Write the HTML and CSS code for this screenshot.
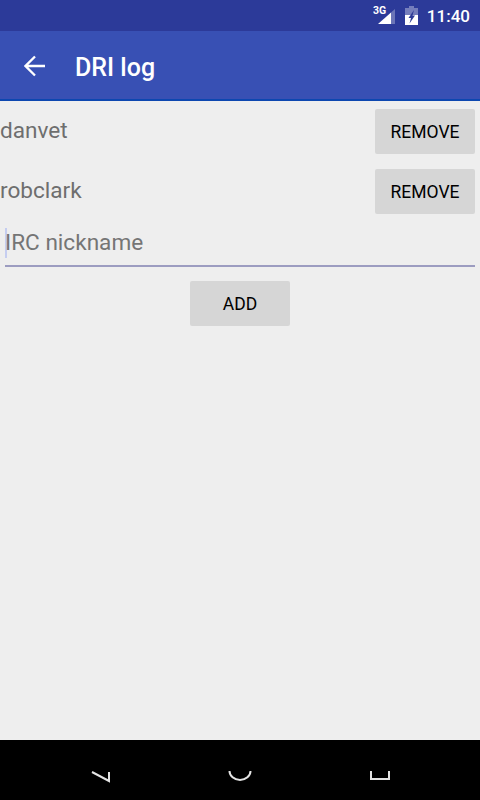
FILE: index.html
```html
<!DOCTYPE html>
<html>
<head>
  <title>DRI log</title>
  <link rel="stylesheet" href="styles.css">
</head>
<body>
  <div class="screen">
    <div class="status-bar">
      <svg class="signal" width="22" height="20" viewBox="0 0 22 20">
        <path d="M22 4v15h-4V7.500z" fill="#fff" opacity="0.3"/>
        <path d="M18 7.500V19H5z" fill="#fff"/>
        <text x="0" y="9" class="signal-label">3G</text>
      </svg>
      <svg class="battery" width="13" height="19" viewBox="0 0 13 19">
        <path d="M4 0h5v2h4v17H0V2h4z" fill="#fff" opacity="0.35"/>
        <path d="M0 9h13v10H0z" fill="#fff"/>
        <path d="M9 4 3.500 12H6L4.500 17.500 10 9.500H7.500z" fill="#2d3b97"/>
      </svg>
      <span class="clock">11:40</span>
    </div>

    <div class="app-bar">
      <svg class="back" width="22" height="22" viewBox="0 0 22 22">
        <path d="M21 11H3M11 1.500 1.500 11l9.500 9.500" fill="none" stroke="#fff" stroke-width="2.300"/>
      </svg>
      <h1>DRI log</h1>
    </div>

    <div class="content">
      <div class="row">
        <span class="nick">danvet</span>
        <button class="btn">REMOVE</button>
      </div>
      <div class="row">
        <span class="nick">robclark</span>
        <button class="btn">REMOVE</button>
      </div>
      <div class="field">
        <span class="caret"></span>
        <span class="placeholder">IRC nickname</span>
      </div>
      <div class="add-row">
        <button class="btn">ADD</button>
      </div>
    </div>

    <div class="nav-bar">
      <svg width="24" height="24" viewBox="0 0 24 24">
        <path d="M4 2 21 11V2" fill="none" stroke="#e4e4e4" stroke-width="2"/>
      </svg>
      <svg width="24" height="24" viewBox="0 0 24 24">
        <path d="M1.500 1a10.500 9 0 0 0 21 0" fill="none" stroke="#e4e4e4" stroke-width="2"/>
      </svg>
      <svg width="24" height="24" viewBox="0 0 24 24">
        <path d="M3 1v8h18V1" fill="none" stroke="#e4e4e4" stroke-width="2"/>
      </svg>
    </div>
  </div>
</body>
</html>
```

FILE: styles.css
```css
* {
  box-sizing: border-box;
}
html, body {
  margin: 0;
  padding: 0;
}
body {
  font-family: Roboto, "Noto Sans", sans-serif;
  background-color: #eeeeee;
}
.screen {
  width: 480px;
  height: 800px;
  display: flex;
  flex-direction: column;
  overflow: hidden;
}
.status-bar {
  height: 31px;
  background: #2c3a99;
  display: flex;
  align-items: center;
  justify-content: flex-end;
  padding-right: 10px;
  color: white;
}
.signal {
  margin-right: 10px;
  margin-top: -1px;
}
.signal-label {
  font-family: Roboto, sans-serif;
  font-size: 10.500px;
  font-weight: 700;
  fill: #fff;
}
.battery {
  margin-right: 9px;
  margin-top: -1px;
}
.clock {
  font-size: 17px;
  font-weight: 500;
}
.app-bar {
  height: 70px;
  background: #3850b4;
  border-bottom: 2px solid #0d47b0;
  display: flex;
  align-items: center;
  padding-left: 24px;
  color: white;
}
.back {
  margin-right: 29px;
  margin-top: 2px;
}
.app-bar h1 {
  margin: 4px 0 0;
  font-size: 25px;
  font-weight: 500;
}
.content {
  flex: 1;
  padding-top: 8px;
}
.row {
  height: 45px;
  margin-bottom: 15px;
  padding-right: 5px;
  display: flex;
  justify-content: space-between;
}
.nick {
  font-size: 22.600px;
  color: #6e6e6e;
  line-height: 44px;
}
.btn {
  width: 100px;
  height: 45px;
  padding: 0;
  background: #d6d6d6;
  border: none;
  border-radius: 2px;
  font-family: inherit;
  font-size: 17.500px;
  font-weight: 400;
  color: #000;
}
.field {
  height: 53px;
  margin: -15px 5px 0;
  padding-top: 6px;
  border-bottom: 2px solid #9c9cc0;
  display: flex;
  align-items: center;
}
.caret {
  width: 2px;
  height: 30px;
  background: #c5cdf0;
}
.placeholder {
  margin-left: -2px;
  font-size: 22.600px;
  color: #757575;
}
.add-row {
  display: flex;
  justify-content: center;
  margin-top: 14px;
}
.nav-bar {
  height: 60px;
  background: #000;
  display: flex;
  justify-content: center;
  gap: 116px;
  padding-top: 30px;
}
```
